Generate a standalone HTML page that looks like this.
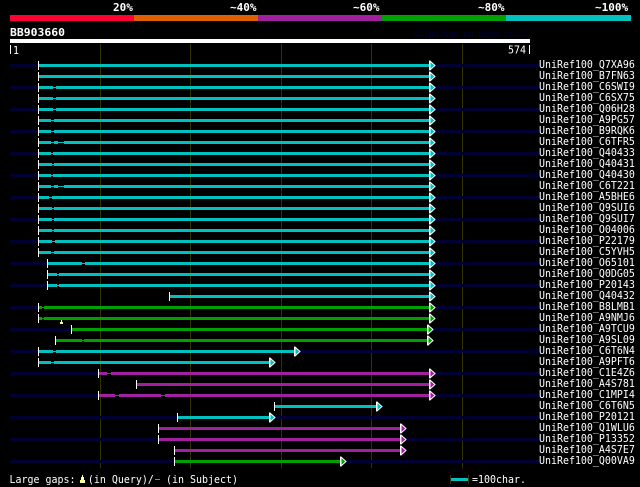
<!DOCTYPE html>
<html><head><meta charset="utf-8"><style>
html,body{margin:0;padding:0;background:#000;width:640px;height:487px;overflow:hidden}
svg{display:block}
text{font-family:"DejaVu Sans Mono","Liberation Mono",monospace;fill:#fff;font-size:11px}
.b{font-weight:bold;font-size:11px}
</style></head><body>
<svg width="640" height="487" viewBox="0 0 640 487">
<rect width="640" height="487" fill="#000"/>
<g shape-rendering="crispEdges">
<rect x="10" y="15" width="124" height="6" fill="#ff0033"/>
<rect x="134" y="15" width="124" height="6" fill="#e06000"/>
<rect x="258" y="15" width="124" height="6" fill="#a020a0"/>
<rect x="382" y="15" width="124" height="6" fill="#00a000"/>
<rect x="506" y="15" width="125" height="6" fill="#00c0c0"/>
<rect x="10" y="39" width="520" height="4" fill="#fff"/>
<path fill="#333300" d="M100 44h1v424h-1zM190 44h1v424h-1zM281 44h1v424h-1zM371 44h1v424h-1zM462 44h1v424h-1z"/>
<path fill="#000033" d="M10 64H38v3H10zM435 64H539v3H435zM10 86H38v3H10zM435 86H539v3H435zM10 108H38v3H10zM435 108H539v3H435zM10 130H38v3H10zM435 130H539v3H435zM10 152H38v3H10zM435 152H539v3H435zM10 174H38v3H10zM435 174H539v3H435zM10 196H38v3H10zM435 196H539v3H435zM10 218H38v3H10zM435 218H539v3H435zM10 240H38v3H10zM435 240H539v3H435zM10 262H47v3H10zM435 262H539v3H435zM10 284H47v3H10zM435 284H539v3H435zM10 306H38v3H10zM435 306H539v3H435zM10 328H71v3H10zM433 328H539v3H433zM10 350H38v3H10zM300 350H539v3H300zM10 372H98v3H10zM435 372H539v3H435zM10 394H98v3H10zM435 394H539v3H435zM10 416H177v3H10zM275 416H539v3H275zM10 438H158v3H10zM406 438H539v3H406zM10 460H174v3H10zM346 460H539v3H346z"/>
<path fill="#00c0c0" d="M39 64H429v3H39zM39 75H429v3H39zM39 86H53v3H39zM56 86H429v3H56zM39 97H53v3H39zM56 97H429v3H56zM39 108H53v3H39zM56 108H429v3H56zM39 119H51v3H39zM54 119H429v3H54zM39 130H51v3H39zM54 130H429v3H54zM39 141H51v3H39zM54 141H58v3H54zM64 141H429v3H64zM39 152H51v3H39zM53 152H429v3H53zM39 163H52v3H39zM54 163H429v3H54zM39 174H51v3H39zM53 174H429v3H53zM39 185H51v3H39zM54 185H58v3H54zM64 185H429v3H64zM39 196H49v3H39zM52 196H429v3H52zM39 207H52v3H39zM54 207H429v3H54zM39 218H52v3H39zM54 218H429v3H54zM39 229H52v3H39zM54 229H429v3H54zM39 240H52v3H39zM55 240H429v3H55zM39 251H51v3H39zM54 251H429v3H54zM48 262H82v3H48zM85 262H429v3H85zM48 273H57v3H48zM59 273H429v3H59zM48 284H57v3H48zM59 284H429v3H59zM170 295H429v3H170zM39 350H53v3H39zM56 350H294v3H56zM39 361H51v3H39zM54 361H269v3H54zM275 405H376v3H275zM178 416H269v3H178zM451 478H468v3H451z"/>
<path fill="#00c0c0" d="M53 87h3v1h-3zM53 98h3v1h-3zM53 109h3v1h-3zM51 120h3v1h-3zM51 131h3v1h-3zM51 142h3v1h-3zM58 142h6v1h-6zM51 153h2v1h-2zM52 164h2v1h-2zM51 175h2v1h-2zM51 186h3v1h-3zM58 186h6v1h-6zM49 197h3v1h-3zM52 208h2v1h-2zM52 219h2v1h-2zM52 230h2v1h-2zM52 241h3v1h-3zM51 252h3v1h-3zM82 263h3v1h-3zM57 274h2v1h-2zM57 285h2v1h-2zM53 351h3v1h-3zM51 362h3v1h-3zM155 479h5v1h-5z"/>
<path fill="#00a000" d="M39 306H42v3H39zM44 306H429v3H44zM39 317H42v3H39zM44 317H429v3H44zM72 328H427v3H72zM56 339H82v3H56zM84 339H427v3H84zM175 460H340v3H175zM42 307h2v1h-2zM42 318h2v1h-2zM82 340h2v1h-2z"/>
<path fill="#a020a0" d="M99 372H107v3H99zM111 372H429v3H111zM137 383H429v3H137zM99 394H115v3H99zM119 394H161v3H119zM165 394H429v3H165zM159 427H400v3H159zM159 438H400v3H159zM175 449H400v3H175zM107 373h4v1h-4zM115 395h4v1h-4zM161 395h4v1h-4z"/>
<path fill="#ffff99" d="M61 320h1v2h1v2h-3v-2h1zM82 475h1v2h1v3h1v3h-5v-3h1v-3h1z"/>
<path fill="#333300" d="M450 475h1v9h-1zM468 475h1v9h-1z"/>
</g>
<g stroke="#fff" stroke-width="1" stroke-linejoin="miter">
<g fill="#00c0c0">
<path d="M430 61L435 65.500L430 70z"/><path d="M430 72L435 76.500L430 81z"/><path d="M430 83L435 87.500L430 92z"/><path d="M430 94L435 98.500L430 103z"/><path d="M430 105L435 109.500L430 114z"/><path d="M430 116L435 120.500L430 125z"/><path d="M430 127L435 131.500L430 136z"/><path d="M430 138L435 142.500L430 147z"/><path d="M430 149L435 153.500L430 158z"/><path d="M430 160L435 164.500L430 169z"/><path d="M430 171L435 175.500L430 180z"/><path d="M430 182L435 186.500L430 191z"/><path d="M430 193L435 197.500L430 202z"/><path d="M430 204L435 208.500L430 213z"/><path d="M430 215L435 219.500L430 224z"/><path d="M430 226L435 230.500L430 235z"/><path d="M430 237L435 241.500L430 246z"/><path d="M430 248L435 252.500L430 257z"/><path d="M430 259L435 263.500L430 268z"/><path d="M430 270L435 274.500L430 279z"/><path d="M430 281L435 285.500L430 290z"/><path d="M430 292L435 296.500L430 301z"/>
<path d="M295 347L300 351.500L295 356z"/><path d="M270 358L275 362.500L270 367z"/><path d="M377 402L382 406.500L377 411z"/><path d="M270 413L275 417.500L270 422z"/>
</g>
<g fill="#00a000">
<path d="M430 303L435 307.500L430 312z"/><path d="M430 314L435 318.500L430 323z"/><path d="M428 325L433 329.500L428 334z"/><path d="M428 336L433 340.500L428 345z"/><path d="M341 457L346 461.500L341 466z"/>
</g>
<g fill="#a020a0">
<path d="M430 369L435 373.500L430 378z"/><path d="M430 380L435 384.500L430 389z"/><path d="M430 391L435 395.500L430 400z"/><path d="M401 424L406 428.500L401 433z"/><path d="M401 435L406 439.500L401 444z"/><path d="M401 446L406 450.500L401 455z"/>
</g>
</g>
<path shape-rendering="crispEdges" fill="#fff" d="M38 61h1v9h-1zM38 72h1v9h-1zM38 83h1v9h-1zM38 94h1v9h-1zM38 105h1v9h-1zM38 116h1v9h-1zM38 127h1v9h-1zM38 138h1v9h-1zM38 149h1v9h-1zM38 160h1v9h-1zM38 171h1v9h-1zM38 182h1v9h-1zM38 193h1v9h-1zM38 204h1v9h-1zM38 215h1v9h-1zM38 226h1v9h-1zM38 237h1v9h-1zM38 248h1v9h-1zM47 259h1v9h-1zM47 270h1v9h-1zM47 281h1v9h-1zM169 292h1v9h-1zM38 303h1v9h-1zM38 314h1v9h-1zM71 325h1v9h-1zM55 336h1v9h-1zM38 347h1v9h-1zM38 358h1v9h-1zM98 369h1v9h-1zM136 380h1v9h-1zM98 391h1v9h-1zM274 402h1v9h-1zM177 413h1v9h-1zM158 424h1v9h-1zM158 435h1v9h-1zM174 446h1v9h-1zM174 457h1v9h-1zM429 61h1v9h-1zM429 72h1v9h-1zM429 83h1v9h-1zM429 94h1v9h-1zM429 105h1v9h-1zM429 116h1v9h-1zM429 127h1v9h-1zM429 138h1v9h-1zM429 149h1v9h-1zM429 160h1v9h-1zM429 171h1v9h-1zM429 182h1v9h-1zM429 193h1v9h-1zM429 204h1v9h-1zM429 215h1v9h-1zM429 226h1v9h-1zM429 237h1v9h-1zM429 248h1v9h-1zM429 259h1v9h-1zM429 270h1v9h-1zM429 281h1v9h-1zM429 292h1v9h-1zM429 303h1v9h-1zM429 314h1v9h-1zM427 325h1v9h-1zM427 336h1v9h-1zM294 347h1v9h-1zM269 358h1v9h-1zM429 369h1v9h-1zM429 380h1v9h-1zM429 391h1v9h-1zM376 402h1v9h-1zM269 413h1v9h-1zM400 424h1v9h-1zM400 435h1v9h-1zM400 446h1v9h-1zM340 457h1v9h-1zM10 45h1v9h-1zM529 45h1v9h-1z"/>
<text class="b" x="113" y="11">20%</text>
<text class="b" x="230" y="11">~40%</text>
<text class="b" x="353" y="11">~60%</text>
<text class="b" x="478" y="11">~80%</text>
<text class="b" x="595" y="11">~100%</text>
<text class="b" x="10" y="36" textLength="55" lengthAdjust="spacingAndGlyphs">BB903660</text>
<text x="414" y="37" style="fill:#000033;font-size:9px" textLength="114" lengthAdjust="spacingAndGlyphs">AlignView.pm Beta rel.7</text>
<g transform="scale(.9063 1)">
<text x="14.300" y="54">1</text>
<text x="560.500" y="53.500">574</text>
<text x="594.700" y="68">UniRef100_Q7XA96</text>
<text x="594.700" y="79">UniRef100_B7FN63</text>
<text x="594.700" y="90">UniRef100_C6SWI9</text>
<text x="594.700" y="101">UniRef100_C6SX75</text>
<text x="594.700" y="112">UniRef100_Q06H28</text>
<text x="594.700" y="123">UniRef100_A9PG57</text>
<text x="594.700" y="134">UniRef100_B9RQK6</text>
<text x="594.700" y="145">UniRef100_C6TFR5</text>
<text x="594.700" y="156">UniRef100_Q40433</text>
<text x="594.700" y="167">UniRef100_Q40431</text>
<text x="594.700" y="178">UniRef100_Q40430</text>
<text x="594.700" y="189">UniRef100_C6T221</text>
<text x="594.700" y="200">UniRef100_A5BHE6</text>
<text x="594.700" y="211">UniRef100_Q9SUI6</text>
<text x="594.700" y="222">UniRef100_Q9SUI7</text>
<text x="594.700" y="233">UniRef100_O04006</text>
<text x="594.700" y="244">UniRef100_P22179</text>
<text x="594.700" y="255">UniRef100_C5YVH5</text>
<text x="594.700" y="266">UniRef100_O65101</text>
<text x="594.700" y="277">UniRef100_Q0DG05</text>
<text x="594.700" y="288">UniRef100_P20143</text>
<text x="594.700" y="299">UniRef100_Q40432</text>
<text x="594.700" y="310">UniRef100_B8LMB1</text>
<text x="594.700" y="321">UniRef100_A9NMJ6</text>
<text x="594.700" y="332">UniRef100_A9TCU9</text>
<text x="594.700" y="343">UniRef100_A9SL09</text>
<text x="594.700" y="354">UniRef100_C6T6N4</text>
<text x="594.700" y="365">UniRef100_A9PFT6</text>
<text x="594.700" y="376">UniRef100_C1E4Z6</text>
<text x="594.700" y="387">UniRef100_A4S781</text>
<text x="594.700" y="398">UniRef100_C1MPI4</text>
<text x="594.700" y="409">UniRef100_C6T6N5</text>
<text x="594.700" y="420">UniRef100_P20121</text>
<text x="594.700" y="431">UniRef100_Q1WLU6</text>
<text x="594.700" y="442">UniRef100_P13352</text>
<text x="594.700" y="453">UniRef100_A4S7E7</text>
<text x="594.700" y="464">UniRef100_Q00VA9</text>
<text x="10.500" y="483">Large gaps:</text>
<text x="97" y="483">(in Query)/</text>
<text x="183.200" y="483">(in Subject)</text>
<text x="520.800" y="483">=100char.</text>
</g>
</svg>
</body></html>
